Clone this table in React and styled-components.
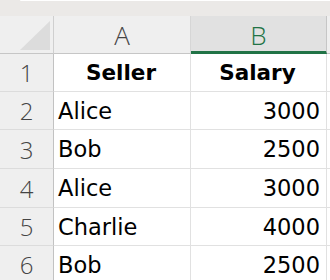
import React from "react";
import styled, { createGlobalStyle } from "styled-components";

const GlobalStyle = createGlobalStyle`
  html, body { margin: 0; padding: 0; background: #ffffff; overflow: hidden; }
  #root { width: 330px; height: 280px; overflow: hidden; }
`;

const Sheet = styled.div`
  width: 330px;
  height: 280px;
  overflow: hidden;
  background: #ffffff;
  display: flex;
  flex-direction: column;
`;

const TopStrip = styled.div`
  height: 16px;
  flex: none;
  background: #ebe9e7;
  display: flex;
  flex-direction: column;
`;

const FormulaEdge = styled.div`
  height: 1px;
  margin-left: 20px;
  background: #ffffff;
  border-bottom-left-radius: 2px;
`;

const Grid = styled.div`
  display: grid;
  grid-template-columns: 54px 137px 136px 1fr;
  grid-template-rows: 38px 38px 38px 39px 39px 38px 38px;
`;

const Corner = styled.div`
  background: #efefef;
  border-right: 1px solid #cfcfcf;
  border-bottom: 1px solid #c6c6c6;
  display: flex;
  align-items: flex-end;
  justify-content: flex-end;
  padding: 0 3px 3px 0;
`;

const ColHeader = styled.div`
  background: ${(p) => (p.$selected ? "#e1e1e1" : "#efefef")};
  border-right: 1px solid ${(p) => (p.$selected ? "#c6c6c6" : "#d6d6d6")};
  border-bottom: ${(p) => (p.$selected ? "3px solid #217346" : "1px solid #c6c6c6")};
  color: ${(p) => (p.$selected ? "#217346" : "#444444")};
  font-family: "Open Sans", "DejaVu Sans", sans-serif;
  font-size: 26px;
  font-weight: 300;
  display: flex;
  align-items: center;
  justify-content: center;
  padding-top: ${(p) => (p.$selected ? "2px" : "0")};
`;

const RowHeader = styled.div`
  background: #efefef;
  border-right: 1px solid #c2c2c2;
  border-bottom: 1px solid #dcdcdc;
  color: #444444;
  font-family: "Open Sans", "DejaVu Sans", sans-serif;
  font-size: 24px;
  font-weight: 300;
  display: flex;
  align-items: center;
  justify-content: center;
`;

const Cell = styled.div`
  border-right: 1px solid #e1e1e1;
  border-bottom: 1px solid #e1e1e1;
  color: #000000;
  font-family: "DejaVu Sans", sans-serif;
  font-size: ${(p) => (p.$bold ? "21.5px" : "22.5px")};
  font-weight: ${(p) => (p.$bold ? 700 : 400)};
  display: flex;
  align-items: center;
  justify-content: ${(p) =>
    p.$align === "right" ? "flex-end" : p.$align === "center" ? "center" : "flex-start"};
  padding: 0 6px 0 4px;
  white-space: nowrap;
  overflow: hidden;
`;

const header = ["Seller", "Salary"];
const rows = [
  ["Alice", "3000"],
  ["Bob", "2500"],
  ["Alice", "3000"],
  ["Charlie", "4000"],
  ["Bob", "2500"],
];

export default function App() {
  return (
    <>
      <GlobalStyle />
      <Sheet>
        <TopStrip>
          <FormulaEdge />
        </TopStrip>
        <Grid>
          <Corner>
            <svg width="30" height="29" viewBox="0 0 30 29">
              <polygon points="0,29 30,0 30,29" fill="#dcdcdc" />
            </svg>
          </Corner>
          <ColHeader>A</ColHeader>
          <ColHeader $selected>B</ColHeader>
          <ColHeader />

          <RowHeader>1</RowHeader>
          <Cell $bold $align="center">{header[0]}</Cell>
          <Cell $bold $align="center">{header[1]}</Cell>
          <Cell />

          {rows.map((r, i) => (
            <React.Fragment key={i}>
              <RowHeader>{i + 2}</RowHeader>
              <Cell>{r[0]}</Cell>
              <Cell $align="right">{r[1]}</Cell>
              <Cell />
            </React.Fragment>
          ))}
        </Grid>
      </Sheet>
    </>
  );
}
